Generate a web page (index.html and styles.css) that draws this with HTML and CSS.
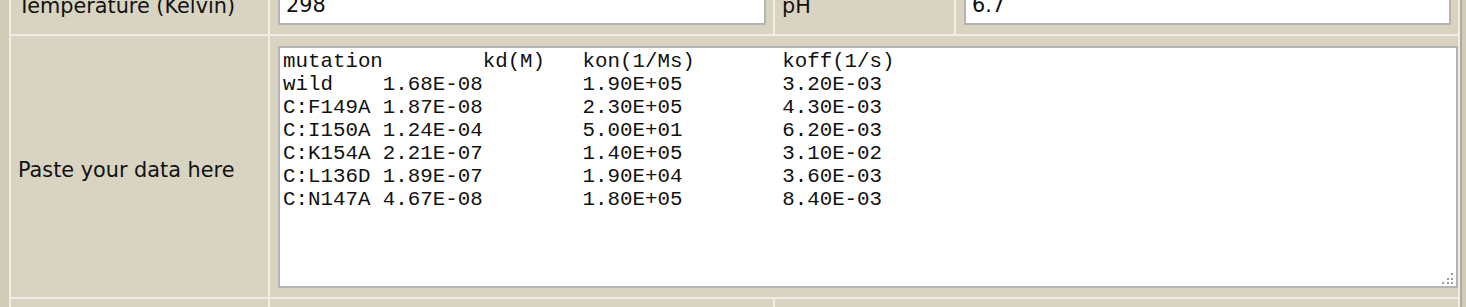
FILE: index.html
```html
<!DOCTYPE html>
<html>
<head>
<meta charset="utf-8">
<title>Data form</title>
<link rel="stylesheet" href="styles.css">
</head>
<body>
<div class="page">
<table class="form">
<colgroup>
<col class="c1"><col class="c2"><col class="c3"><col class="c4">
</colgroup>
<tr class="row-top">
<td class="label">Temperature (Kelvin)</td>
<td class="field"><input class="text" type="text" value="298"></td>
<td class="label">pH</td>
<td class="field"><input class="text" type="text" value="6.7"></td>
</tr>
<tr class="row-data">
<td class="label label-data">Paste your data here</td>
<td class="area-cell" colspan="3"><div class="area-wrap"><textarea class="data" spellcheck="false">mutation        kd(M)   kon(1/Ms)       koff(1/s)
wild    1.68E-08        1.90E+05        3.20E-03
C:F149A 1.87E-08        2.30E+05        4.30E-03
C:I150A 1.24E-04        5.00E+01        6.20E-03
C:K154A 2.21E-07        1.40E+05        3.10E-02
C:L136D 1.89E-07        1.90E+04        3.60E-03
C:N147A 4.67E-08        1.80E+05        8.40E-03</textarea><svg class="grip" width="12" height="12" viewBox="0 0 12 12"><rect x="9" y="0" width="2" height="2"/><rect x="5" y="5" width="2" height="2"/><rect x="9" y="5" width="2" height="2"/><rect x="0" y="9" width="2" height="2"/><rect x="5" y="9" width="2" height="2"/><rect x="9" y="9" width="2" height="2"/></svg></div></td>
</tr>
<tr class="row-next">
<td class="label"></td>
<td class="label"></td>
<td class="label" colspan="2"></td>
</tr>
</table>
</div>
</body>
</html>
```

FILE: styles.css
```css
html, body {
  margin: 0;
  padding: 0;
  background: #d0ccb8;
  overflow: hidden;
}

.page {
  padding-left: 9px;
  width: 1451px;
  border-right: 2px solid #aeac9f;
}

.form {
  table-layout: fixed;
  width: 1451px;
  border-collapse: separate;
  border-spacing: 2px;
  background: #efede4;
  margin-top: -22px;
  font-family: "DejaVu Sans", Verdana, sans-serif;
  font-size: 20.8px;
  color: #111;
}

.c1 { width: 257px; }
.c2 { width: 503px; }
.c3 { width: 179px; }
.c4 { width: 502px; }

.form td {
  background: #d8d4c1;
  padding: 0;
}

.form td.label {
  padding: 0 0 2px 7px;
  vertical-align: middle;
  white-space: nowrap;
}

.row-top td {
  height: 54px;
  box-sizing: border-box;
}

.field {
  vertical-align: top;
}

.form td.field {
  padding: 5px 7px 9px 8px;
}

.text {
  display: block;
  box-sizing: border-box;
  width: 100%;
  height: 40px;
  margin: 0;
  padding: 6px 6px;
  border: 2px solid #b4b4b4;
  background: #fff;
  font-family: "DejaVu Sans", Verdana, sans-serif;
  font-size: 20.8px;
  color: #111;
  outline: none;
}

.form td.label-data {
  padding-top: 6px;
  padding-bottom: 0;
}

.form td.area-cell {
  padding: 10px 0 9px 8px;
}

.area-wrap {
  position: relative;
}

.data {
  display: block;
  box-sizing: border-box;
  width: 100%;
  height: 242px;
  margin: 0;
  padding: 2px 3px;
  border: 2px solid #b4b4b4;
  background: #fff;
  font-family: "Liberation Mono", "Courier New", monospace;
  font-size: 20.8px;
  line-height: normal;
  color: #111;
  resize: none;
  outline: none;
  overflow: hidden;
  white-space: pre;
}

.grip {
  position: absolute;
  right: 4px;
  bottom: 3px;
  fill: #9a9a9a;
}

.row-next td {
  height: 20px;
}
```
